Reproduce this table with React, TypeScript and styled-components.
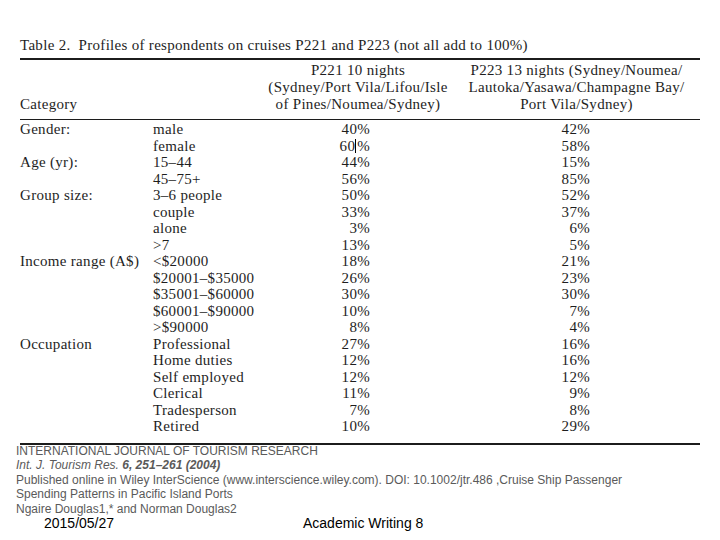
import React from 'react';
import styled, { createGlobalStyle } from 'styled-components';

const GlobalStyle = createGlobalStyle`
  html, body {
    margin: 0;
    padding: 0;
    background: #ffffff;
  }
`;

type Row = { cat?: string; sub: string; a: string; b: string; mark?: boolean };

const ROWS: Row[] = [
  { cat: 'Gender:', sub: 'male', a: '40', b: '42' },
  { sub: 'female', a: '60', b: '58', mark: true },
  { cat: 'Age (yr):', sub: '15–44', a: '44', b: '15' },
  { sub: '45–75+', a: '56', b: '85' },
  { cat: 'Group size:', sub: '3–6 people', a: '50', b: '52' },
  { sub: 'couple', a: '33', b: '37' },
  { sub: 'alone', a: '3', b: '6' },
  { sub: '>7', a: '13', b: '5' },
  { cat: 'Income range (A$)', sub: '<$20000', a: '18', b: '21' },
  { sub: '$20001–$35000', a: '26', b: '23' },
  { sub: '$35001–$60000', a: '30', b: '30' },
  { sub: '$60001–$90000', a: '10', b: '7' },
  { sub: '>$90000', a: '8', b: '4' },
  { cat: 'Occupation', sub: 'Professional', a: '27', b: '16' },
  { sub: 'Home duties', a: '12', b: '16' },
  { sub: 'Self employed', a: '12', b: '12' },
  { sub: 'Clerical', a: '11', b: '9' },
  { sub: 'Tradesperson', a: '7', b: '8' },
  { sub: 'Retired', a: '10', b: '29' },
];

export default function App() {
  return (
    <Slide>
      <GlobalStyle />
      <TableBlock>
        <Caption>Table 2.&nbsp; Profiles of respondents on cruises P221 and P223 (not all add to 100%)</Caption>
        <HeadGrid>
          <HeadCell $align="left">Category</HeadCell>
          <HeadCell $align="left" />
          <HeadCell $align="center">
            P221 10 nights
            <br />
            (Sydney/Port Vila/Lifou/Isle
            <br />
            of Pines/Noumea/Sydney)
          </HeadCell>
          <HeadCell $align="center">
            P223 13 nights (Sydney/Noumea/
            <br />
            Lautoka/Yasawa/Champagne Bay/
            <br />
            Port Vila/Sydney)
          </HeadCell>
        </HeadGrid>
        <BodyGrid>
          {ROWS.map((r, i) => (
            <React.Fragment key={i}>
              <Cell>{r.cat}</Cell>
              <Cell>{r.sub}</Cell>
              <Value $pad={83}>
                {r.a}
                {r.mark && <Caret />}%
              </Value>
              <Value $pad={110}>{r.b}%</Value>
            </React.Fragment>
          ))}
        </BodyGrid>
      </TableBlock>
      <Footer>
        <Ref>INTERNATIONAL JOURNAL OF TOURISM RESEARCH</Ref>
        <Ref>
          <i>Int. J. Tourism Res. </i>
          <b>
            <i>6, 251–261 (2004)</i>
          </b>
        </Ref>
        <Ref>
          Published online in Wiley InterScience (www.interscience.wiley.com). DOI: 10.1002/jtr.486 ,Cruise Ship Passenger
        </Ref>
        <Ref>Spending Patterns in Pacific Island Ports</Ref>
        <Ref>Ngaire Douglas1,* and Norman Douglas2</Ref>
        <SlideFoot>
          <Date>2015/05/27</Date>
          <PageLabel>Academic Writing 8</PageLabel>
        </SlideFoot>
      </Footer>
    </Slide>
  );
}

const Slide = styled.div`
  width: 720px;
  height: 540px;
  overflow: hidden;
  background: #ffffff;
  box-sizing: border-box;
  padding-top: 36px;
`;

const TableBlock = styled.div`
  margin: 0 20px;
  font-family: 'Liberation Serif', 'Times New Roman', serif;
  font-size: 15px;
  letter-spacing: 0.3px;
  color: #1e1e1e;
`;

const Caption = styled.div`
  line-height: 18px;
  padding-bottom: 4px;
  border-bottom: 2px solid #1c1c1c;
`;

const columns = '133px 110px 190px 1fr';

const HeadGrid = styled.div`
  display: grid;
  grid-template-columns: ${columns};
  align-items: end;
  padding: 2px 0 6px;
  border-bottom: 1px solid #1c1c1c;
`;

const HeadCell = styled.div<{ $align: 'left' | 'center' }>`
  text-align: ${(p) => p.$align};
  line-height: 17px;
  white-space: nowrap;
`;

const BodyGrid = styled.div`
  display: grid;
  grid-template-columns: ${columns};
  grid-auto-rows: 16.5px;
  padding: 1px 0 8px;
  border-bottom: 2px solid #1c1c1c;
`;

const Cell = styled.div`
  line-height: 16.5px;
  white-space: nowrap;
`;

const Value = styled(Cell)<{ $pad: number }>`
  text-align: right;
  padding-right: ${(p) => p.$pad}px;
`;

const Caret = styled.span`
  display: inline-block;
  width: 1px;
  height: 14px;
  margin: 0 1px -2px 0;
  background: #000000;
`;

const Footer = styled.div`
  margin: -1px 0 0 16px;
  font-family: 'Liberation Sans', Arial, sans-serif;
`;

const Ref = styled.div`
  font-size: 12px;
  line-height: 14.5px;
  color: #5a5a5a;
  white-space: nowrap;
`;

const SlideFoot = styled.div`
  display: flex;
  font-size: 14px;
  line-height: 15px;
  color: #000000;
`;

const Date = styled.div`
  width: 259px;
  padding-left: 28px;
`;

const PageLabel = styled.div``;
